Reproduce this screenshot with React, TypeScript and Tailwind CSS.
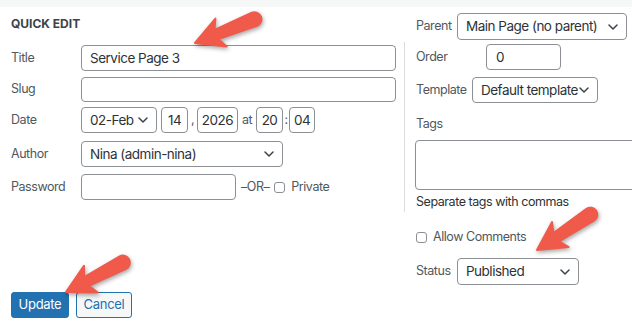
import React from 'react'

const Chevron = () => (
  <svg width="10" height="6" viewBox="0 0 10 6" className="shrink-0">
    <path d="M1 1l4 4 4-4" fill="none" stroke="#3c434a" strokeWidth="1.5" strokeLinecap="round" strokeLinejoin="round" />
  </svg>
)

function Select({ value, className }: { value: string; className: string }) {
  return (
    <div className={`flex items-center justify-between rounded-[4px] border border-[#8c8f94] bg-white pl-2 pr-2 text-[13.5px] tracking-[-0.5px] text-[#2c3338] ${className}`}>
      <span className="whitespace-nowrap">{value}</span>
      <Chevron />
    </div>
  )
}

function Input({ value = '', className, center }: { value?: string; className: string; center?: boolean }) {
  return (
    <div className={`flex items-center rounded-[4px] border border-[#8c8f94] bg-white text-[13.5px] tracking-[-0.5px] text-[#2c3338] ${center ? 'justify-center' : 'pl-2'} ${className}`}>
      {value}
    </div>
  )
}

const Check = () => <span className="inline-block h-[11px] w-[11px] rounded-[3px] border border-[#8c8f94] bg-white" />

function Arrow({ x, y, angle }: { x: number; y: number; angle: number }) {
  return (
    <g transform={`translate(${x} ${y}) rotate(${angle})`}>
      <path
        d="M0 0 L28 -15 L23 -5 L64 -7 A7 7 0 0 1 64 7 L23 5 L28 15 Z"
        fill="#f05a4b"
        stroke="#f05a4b"
        strokeWidth="2"
        strokeLinejoin="round"
      />
    </g>
  )
}

export default function App() {
  return (
    <div className="relative h-[324px] w-[632px] overflow-hidden bg-white font-['Inter',sans-serif] text-[12.5px] tracking-[-0.45px] text-[#50575e]">
      <div className="h-[7px] bg-[#f6f7f7]" />

      <div className="flex">
        {/* left fieldset */}
        <div className="w-[405px] shrink-0">
          <div className="mt-[9px] pl-[11px] text-[12px] font-bold leading-4 tracking-[0px] text-[#3c434a]">QUICK EDIT</div>
          <div className="mt-[10px] border-r border-[#dcdcde] pb-[12px] pl-[11px] pr-2 pt-[3px]">
            <div className="flex h-[26px] items-center">
              <span className="w-[70px]">Title</span>
              <Input value="Service Page 3" className="h-[26px] flex-1" />
            </div>
            <div className="mt-[6px] flex h-[25px] items-center">
              <span className="w-[70px]">Slug</span>
              <Input className="h-[25px] flex-1" />
            </div>
            <div className="mt-[5px] flex h-[26px] items-center">
              <span className="w-[70px]">Date</span>
              <Select value="02-Feb" className="h-[26px] w-[76px]" />
              <Input value="14" center className="ml-[4px] h-[26px] w-[27px]" />
              <span className="w-[9px] text-center">,</span>
              <Input value="2026" center className="h-[26px] w-[41px]" />
              <span className="w-[18px] text-center">at</span>
              <Input value="20" center className="h-[26px] w-[27px]" />
              <span className="w-[6px] text-center">:</span>
              <Input value="04" center className="h-[26px] w-[26px]" />
            </div>
            <div className="mt-[8px] flex h-[26px] items-center">
              <span className="w-[70px]">Author</span>
              <Select value="Nina (admin-nina)" className="h-[26px] w-[202px]" />
            </div>
            <div className="mt-[7px] flex h-[26px] items-center">
              <span className="w-[70px]">Password</span>
              <Input className="h-[26px] w-[155px]" />
              <span className="ml-[5px]">–OR–</span>
              <span className="ml-[5px] flex items-center"><Check /></span>
              <span className="ml-[6px]">Private</span>
            </div>
          </div>
        </div>

        {/* right fieldset */}
        <div className="flex-1 pl-[11px]">
          <div className="mt-[6px] flex h-[27px] items-center">
            <span className="w-[41px]">Parent</span>
            <Select value="Main Page (no parent)" className="h-[27px] w-[170px]" />
          </div>
          <div className="mt-[4px] flex h-[26px] items-center">
            <span className="w-[70px]">Order</span>
            <Input value="0" className="h-[26px] w-[75px] pl-[9px]" />
          </div>
          <div className="mt-[7px] flex h-[26px] items-center">
            <span className="w-[56px]">Template</span>
            <Select value="Default template" className="h-[26px] w-[126px]" />
          </div>
          <div className="mt-[13px] leading-4">Tags</div>
          <div className="-ml-px mt-[8px] h-[50px] w-[240px] rounded-[4px] border border-[#8c8f94] bg-white" />
          <div className="mt-[4px] leading-4 text-[#2c3338]">Separate tags with commas</div>
          <div className="mt-[19px] flex items-center leading-4">
            <Check />
            <span className="ml-[6px]">Allow Comments</span>
          </div>
          <div className="mt-[13px] flex h-[27px] items-center">
            <span className="w-[41px]">Status</span>
            <Select value="Published" className="h-[27px] w-[122px]" />
          </div>
        </div>
      </div>

      <div className="mt-[7px] flex gap-[7px] pl-[11px]">
        <button className="h-[26px] w-[58px] rounded-[3px] border border-[#2271b1] bg-[#2271b1] text-[13px] tracking-[-0.3px] text-white">Update</button>
        <button className="h-[26px] w-[56px] rounded-[3px] border border-[#2271b1] bg-[#f6f7f7] text-[13px] tracking-[-0.3px] text-[#2271b1]">Cancel</button>
      </div>

      <svg className="pointer-events-none absolute left-0 top-0 drop-shadow-[1px_2px_2px_rgba(0,0,0,0.35)]" width="632" height="324">
        <Arrow x={195} y={43} angle={-21.8} />
        <Arrow x={537} y={250} angle={-33.5} />
        <Arrow x={66} y={292} angle={-27.3} />
      </svg>
    </div>
  )
}
